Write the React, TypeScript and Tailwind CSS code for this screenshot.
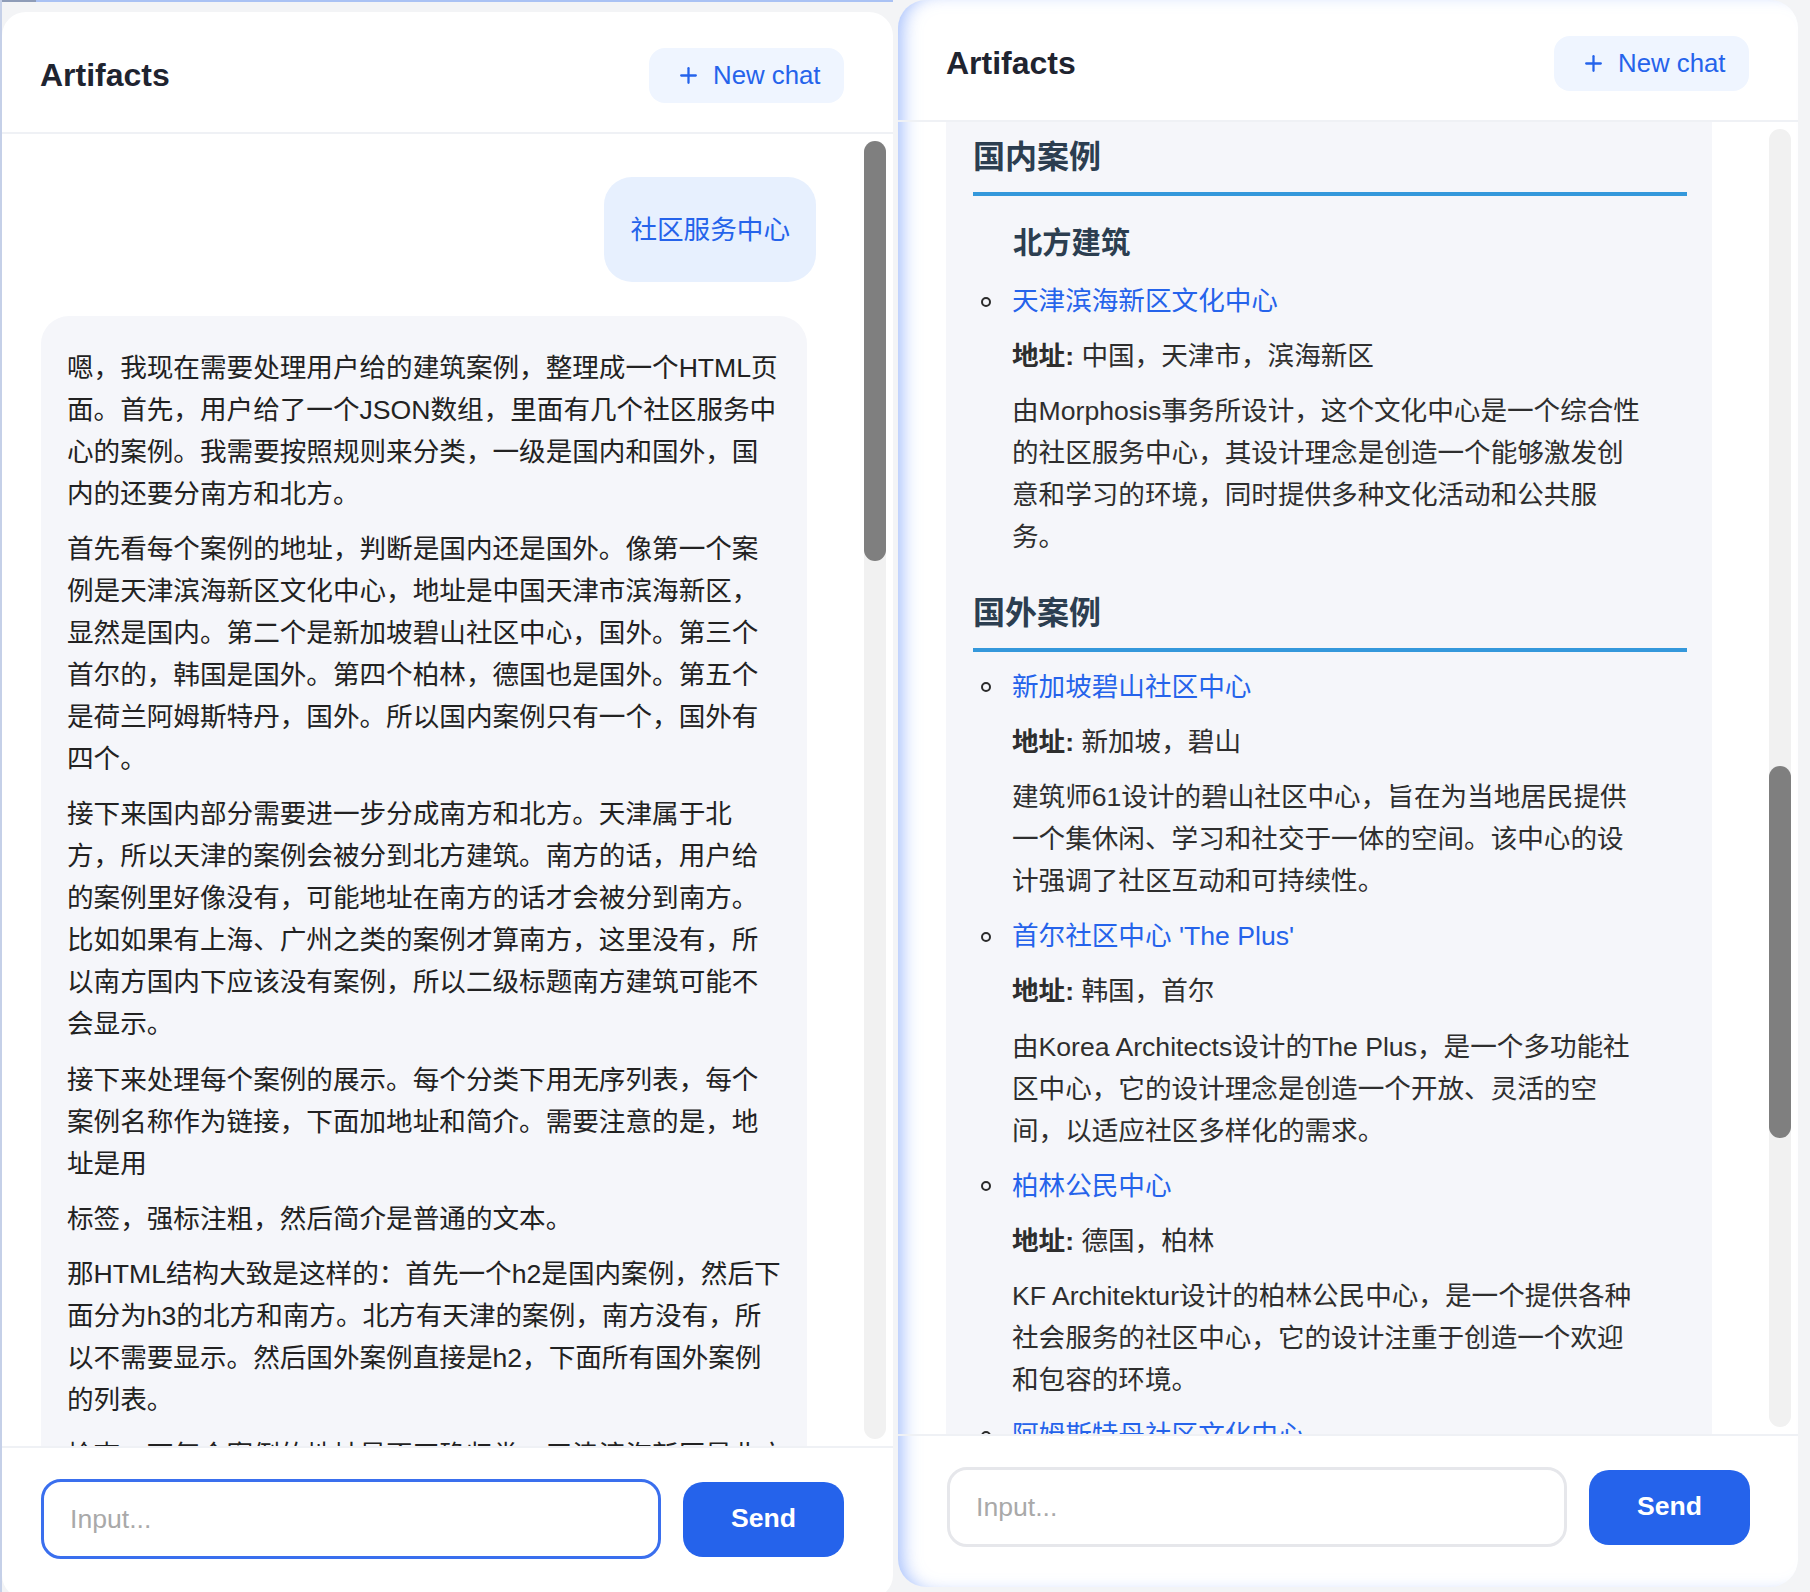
import { Plus } from "lucide-react";

const FONT = "font-['Liberation_Sans','Noto_Sans_CJK_SC',sans-serif]";

function Lines({ lines, className }: { lines: string[]; className: string }) {
  return (
    <p className={className}>
      {lines.map((l, i) => (
        <span key={i} className="block whitespace-nowrap">
          {l}
        </span>
      ))}
    </p>
  );
}

function Header({ left }: { left: boolean }) {
  return (
    <div
      className={
        left
          ? "h-[122px] shrink-0 border-b-2 border-[#eff1f5] flex items-center justify-between pl-[38px] pr-[49px] pt-[6px]"
          : "h-[122px] shrink-0 border-b-2 border-[#eff1f5] flex items-center justify-between pl-[48px] pr-[49px] pt-[6px]"
      }
    >
      <h1 className="text-[32px] leading-[40px] font-bold text-[#1f2430]">Artifacts</h1>
      <button className="h-[55px] w-[195px] rounded-[16px] bg-[#eff5ff] flex items-center pl-[27px] gap-[12px] text-[#2563eb]">
        <Plus size={25} strokeWidth={2.2} />
        <span className="text-[25.8px] leading-[32px] font-medium">New chat</span>
      </button>
    </div>
  );
}

function Footer({ left }: { left: boolean }) {
  return (
    <div
      className={
        left
          ? "shrink-0 border-t-2 border-[#eff1f5] pt-[31px] pb-[40px] pl-[39px] pr-[49px] flex items-center gap-[22px]"
          : "shrink-0 border-t-2 border-[#eff1f5] pt-[31px] pb-[40px] pl-[49px] pr-[48px] flex items-center gap-[22px]"
      }
    >
      <input
        readOnly
        placeholder="Input..."
        className={
          left
            ? "w-[620px] h-[80px] rounded-[20px] border-[3px] border-[#3a6fee] bg-white pl-[26px] text-[26.6px] text-[#222] placeholder:text-[#a9a9a9] outline-none"
            : "w-[620px] h-[80px] rounded-[20px] border-[3px] border-[#e6e7eb] bg-white pl-[26px] text-[26.6px] text-[#222] placeholder:text-[#a9a9a9] outline-none"
        }
      />
      <button className="w-[161px] h-[75px] rounded-[20px] bg-[#2563eb] text-white text-[26.6px] font-bold">
        Send
      </button>
    </div>
  );
}

function ScrollBar({ thumb }: { thumb: string }) {
  return (
    <div className="w-[22px] mr-[7px] my-[7px] shrink-0 rounded-full bg-[#f1f1f1] flex flex-col">
      <div className={thumb} />
    </div>
  );
}

const P_CLASS = "mt-[13.2px] first:mt-0 text-[26.6px] leading-[42px] text-[#222222]";

function LeftPanel() {
  return (
    <div className="w-[891px] h-[1587px] shrink-0 bg-white rounded-[24px] flex flex-col overflow-hidden">
      <Header left />
      <div className="flex-1 min-h-0 flex overflow-hidden">
        <div className="flex-1 min-w-0 pl-[39px] pr-[48px] pt-[43px] overflow-hidden">
          <div className="flex justify-end">
            <div className="rounded-[28px] bg-[#e7f0fe] px-[26px] py-[31.5px] text-[26.6px] leading-[42px] text-[#2563eb]">
              社区服务中心
            </div>
          </div>
          <div className="mt-[34px] w-[766px] rounded-[28px] bg-[#f5f6fa] pt-[31px] px-[26px] pb-[30px]">
            <Lines
              className={P_CLASS}
              lines={[
                "嗯，我现在需要处理用户给的建筑案例，整理成一个HTML页",
                "面。首先，用户给了一个JSON数组，里面有几个社区服务中",
                "心的案例。我需要按照规则来分类，一级是国内和国外，国",
                "内的还要分南方和北方。",
              ]}
            />
            <Lines
              className={P_CLASS}
              lines={[
                "首先看每个案例的地址，判断是国内还是国外。像第一个案",
                "例是天津滨海新区文化中心，地址是中国天津市滨海新区，",
                "显然是国内。第二个是新加坡碧山社区中心，国外。第三个",
                "首尔的，韩国是国外。第四个柏林，德国也是国外。第五个",
                "是荷兰阿姆斯特丹，国外。所以国内案例只有一个，国外有",
                "四个。",
              ]}
            />
            <Lines
              className={P_CLASS}
              lines={[
                "接下来国内部分需要进一步分成南方和北方。天津属于北",
                "方，所以天津的案例会被分到北方建筑。南方的话，用户给",
                "的案例里好像没有，可能地址在南方的话才会被分到南方。",
                "比如如果有上海、广州之类的案例才算南方，这里没有，所",
                "以南方国内下应该没有案例，所以二级标题南方建筑可能不",
                "会显示。",
              ]}
            />
            <Lines
              className={P_CLASS}
              lines={[
                "接下来处理每个案例的展示。每个分类下用无序列表，每个",
                "案例名称作为链接，下面加地址和简介。需要注意的是，地",
                "址是用",
              ]}
            />
            <Lines className={P_CLASS} lines={["标签，强标注粗，然后简介是普通的文本。"]} />
            <Lines
              className={P_CLASS}
              lines={[
                "那HTML结构大致是这样的：首先一个h2是国内案例，然后下",
                "面分为h3的北方和南方。北方有天津的案例，南方没有，所",
                "以不需要显示。然后国外案例直接是h2，下面所有国外案例",
                "的列表。",
              ]}
            />
            <Lines
              className={P_CLASS}
              lines={["检查一下每个案例的地址是否正确归类，天津滨海新区是北方", "地区，正确。其他四个都是国外。"]}
            />
          </div>
        </div>
        <ScrollBar thumb="h-[420px] rounded-full bg-[#7f7f7f]" />
      </div>
      <Footer left />
    </div>
  );
}

function CaseItem({
  name,
  address,
  desc,
  first,
}: {
  name: string;
  address: string;
  desc: string[];
  first?: boolean;
}) {
  return (
    <li className={first ? "flex" : "flex mt-[13.2px]"}>
      <div className="w-[39px] shrink-0">
        <div className="ml-[8px] mt-[16.5px] w-[10px] h-[10px] rounded-full border-2 border-[#2b2b2b]" />
      </div>
      <div className="flex-1 min-w-0 flex flex-col gap-[13.2px]">
        <a className="text-[26.6px] leading-[42px] text-[#2563eb]">{name}</a>
        <p className="text-[26.6px] leading-[42px] text-[#2e2e2e]">
          <strong className="font-bold">地址:</strong> {address}
        </p>
        <Lines className="text-[26.6px] leading-[42px] text-[#2e2e2e]" lines={desc} />
      </div>
    </li>
  );
}

function RightPanel() {
  return (
    <div className="ml-[5px] w-[900px] h-[1587px] shrink-0 bg-white rounded-[28px] flex flex-col overflow-hidden shadow-[inset_12px_0_18px_-8px_rgba(100,145,250,0.6)]">
      <Header left={false} />
      <div className="flex-1 min-h-0 flex overflow-hidden">
        <div className="flex-1 min-w-0 pl-[48px] pr-[48px] overflow-hidden">
          <div className="w-[766px] rounded-b-[28px] bg-[#f5f6fa] pt-[14px] pl-[27px] pr-[25px] pb-[30px]">
            <h2 className="text-[32px] leading-[42px] font-bold text-[#2c3e50] pb-[14px] border-b-4 border-[#3498db]">
              国内案例
            </h2>
            <h3 className="mt-[27px] pl-[40px] text-[29.3px] leading-[40px] font-bold text-[#2c3e50]">
              北方建筑
            </h3>
            <ul className="mt-[17px]">
              <CaseItem
                first
                name="天津滨海新区文化中心"
                address="中国，天津市，滨海新区"
                desc={[
                  "由Morphosis事务所设计，这个文化中心是一个综合性",
                  "的社区服务中心，其设计理念是创造一个能够激发创",
                  "意和学习的环境，同时提供多种文化活动和公共服",
                  "务。",
                ]}
              />
            </ul>
            <h2 className="mt-[34px] text-[32px] leading-[42px] font-bold text-[#2c3e50] pb-[14px] border-b-4 border-[#3498db]">
              国外案例
            </h2>
            <ul className="mt-[13.2px]">
              <CaseItem
                first
                name="新加坡碧山社区中心"
                address="新加坡，碧山"
                desc={[
                  "建筑师61设计的碧山社区中心，旨在为当地居民提供",
                  "一个集休闲、学习和社交于一体的空间。该中心的设",
                  "计强调了社区互动和可持续性。",
                ]}
              />
              <CaseItem
                name="首尔社区中心 'The Plus'"
                address="韩国，首尔"
                desc={[
                  "由Korea Architects设计的The Plus，是一个多功能社",
                  "区中心，它的设计理念是创造一个开放、灵活的空",
                  "间，以适应社区多样化的需求。",
                ]}
              />
              <CaseItem
                name="柏林公民中心"
                address="德国，柏林"
                desc={[
                  "KF Architektur设计的柏林公民中心，是一个提供各种",
                  "社会服务的社区中心，它的设计注重于创造一个欢迎",
                  "和包容的环境。",
                ]}
              />
              <CaseItem
                name="阿姆斯特丹社区文化中心"
                address="荷兰，阿姆斯特丹"
                desc={["由MVRDV设计的社区文化中心，为居民提供多种", "文化活动和社交空间。"]}
              />
            </ul>
          </div>
        </div>
        <ScrollBar thumb="mt-[637px] h-[372px] rounded-full bg-[#7f7f7f]" />
      </div>
      <Footer left={false} />
    </div>
  );
}

export default function App() {
  return (
    <div className={`w-[1810px] h-[1592px] bg-[#f3f4f6] flex items-start overflow-hidden ${FONT}`}>
      <div className="w-[893px] h-[1592px] shrink-0 flex flex-col border-l-2 border-[#c5d0e8]">
        <div className="h-[2px] shrink-0 flex">
          <div className="w-[34px] bg-[#8f9db8]" />
          <div className="flex-1 bg-[#aac2f4]" />
        </div>
        <div className="mt-[10px] flex">
          <LeftPanel />
        </div>
      </div>
      <RightPanel />
    </div>
  );
}
